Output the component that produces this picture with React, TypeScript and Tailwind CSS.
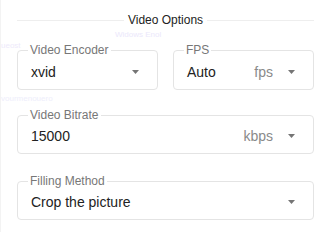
const Arrow: React.FC = () => (
    <span className="w-[23px] flex items-center justify-center">
        <svg width="7" height="4" viewBox="0 0 7 4"><path d="M0 0h7L3.5 4z" fill="#757575" /></svg>
    </span>
);

type FieldProps = {
    label: string;
    value: string;
    suffix?: string;
    className?: string;
    rowClass?: string;
};

const Field: React.FC<FieldProps> = ({ label, value, suffix, className = '', rowClass = 'pt-[6px] pb-[8px]' }) => (
    <fieldset className={`border border-[#e4e4e4] rounded-[4px] px-[10px] ${className}`}>
        <legend className="px-[2px] text-[12px] leading-[12px] text-[#777777]">{label}</legend>
        <div className={`flex items-center pl-[3px] ${rowClass}`}>
            <span className="flex-1 text-[14px] leading-[18px] text-[#222222]">{value}</span>
            {suffix && <span className="mr-[7px] text-[14px] leading-[18px] text-[#8a8a8a]">{suffix}</span>}
            <Arrow />
        </div>
    </fieldset>
);

export default function App() {
    return (
        <div className="relative w-[326px] h-[232px] bg-white border-l border-[#f3f3f3] pl-[16px] pr-[12px] overflow-hidden" style={{ fontFamily: '"Liberation Sans", Arial, sans-serif' }}>
            {/* faint ghost text behind the panel */}
            <span className="absolute left-[114px] top-[31px] text-[8px] leading-[8px] text-[#ebe8fb]">Widows Enol</span>
            <span className="absolute left-[0px] top-[42px] text-[8px] leading-[8px] text-[#eeeafb]">ueost</span>
            <span className="absolute left-[0px] top-[95px] text-[8px] leading-[8px] text-[#eeeefb]">vourmenouero</span>

            {/* Title */}
            <div className="flex items-center h-[14px] mt-[13px]">
                <div className="flex-1 h-px bg-[#eeeeee]" />
                <span className="px-[4px] text-[12px] leading-[14px] text-[#222222]">Video Options</span>
                <div className="flex-1 h-px bg-[#eeeeee]" />
            </div>

            <div className="grid grid-cols-2 gap-[15px] mt-[17px]">
                <Field label="Video Encoder" value="xvid" rowClass="pt-[7px] pb-[8px]" />
                <Field label="FPS" value="Auto" suffix="fps" rowClass="pt-[7px] pb-[8px]" />
            </div>

            <Field label="Video Bitrate" value="15000" suffix="kbps" className="block w-full mt-[19px]" />
            <Field label="Filling Method" value="Crop the picture" className="block w-full mt-[21px]" />
        </div>
    );
}
